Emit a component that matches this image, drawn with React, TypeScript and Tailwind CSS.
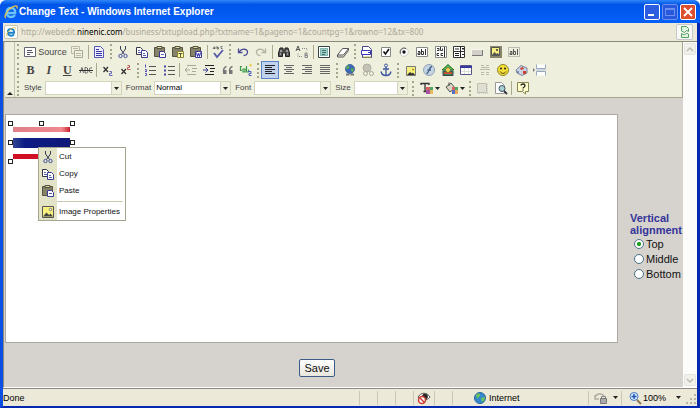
import React, { useState } from "react";

type IconProps = { children: React.ReactNode; small?: boolean };

const Icon = ({ children, small }: IconProps) => (
  <svg
    viewBox="0 0 16 16"
    className={`block shrink-0 ${small ? "size-3" : "size-4"}`}
    fill="none"
    stroke="#333"
    aria-hidden="true"
  >
    {children}
  </svg>
);

const Explorer = ({ small }: { small?: boolean }) => (
  <Icon small={small}>
    <path
      d="M4 9h8.200c.3-3-1.200-5-4-5S3.700 6 3.700 8.700 5.500 13 8.200 13c1.800 0 3-.7 3.700-2"
      stroke={small ? "#1c80c8" : "#6cc4f8"}
      strokeWidth="2.400"
    />
    <path d="M3 14C.5 13 3 7.500 8 4c4-3 7-3 6 .5" stroke="#e8c54a" strokeWidth="1.300" />
  </Icon>
);

const page = "M3.500 2.500h6l3 3v8h-9z";

const icons: Record<string, React.ReactNode> = {
  source: (
    <>
      <path d="M2.500 3.500h11v9h-11z" fill="#fff" stroke="#667" />
      <path d="M5 6.500h5M5 8.500h6M5 10.500h3" stroke="#556" />
    </>
  ),
  templates: (
    <>
      <path d="M2.500 2.500h8v7h-8z" stroke="#bbb8a8" />
      <path d="M5.500 6.500h8v7h-8z" fill="#efefde" stroke="#aaa89a" />
      <path d="M4 4.500h5M7 9.500h5M7 11.500h5" stroke="#bbb8a8" />
    </>
  ),
  doc: (
    <>
      <path d={page} fill="#eef" stroke="#5454b8" />
      <path d="M5 5.500h3M5 7.500h6M5 9.500h6M5 11.500h6" stroke="#3535a8" />
    </>
  ),
  cut: (
    <>
      <path d="M5.500 2v3l4 5.500M10.500 2v3l-4 5.500" stroke="#333a55" />
      <circle cx="5.500" cy="12" r="1.700" stroke="#4452a0" />
      <circle cx="10.500" cy="12" r="1.700" stroke="#4452a0" />
    </>
  ),
  copy: (
    <>
      <path d="M2.500 3.500h4l2 2v5h-6z" fill="#fff" stroke="#334" />
      <path d="M7.500 6.500h4l2 2v5h-6z" fill="#fff" stroke="#3c3c94" />
      <path d="M4 6.500h2M4 8.500h3M9 9.500h2M9 11.500h3" stroke="#5566a8" />
    </>
  ),
  paste: (
    <>
      <path d="M2.500 3.500h10v9h-10z" fill="#85826a" stroke="#55533f" />
      <path d="M5 2.500h5v2H5z" fill="#d8d5a8" stroke="#55533f" />
      <path d="M7.500 7.500h4l2 2v4h-6z" fill="#fff" stroke="#3c3c94" />
      <path d="M9 10.500h3" stroke="#5566a8" />
    </>
  ),
  pasteText: (
    <>
      <path d="M2.500 3.500h10v9h-10z" fill="#85826a" stroke="#55533f" />
      <path d="M5 2.500h5v2H5z" fill="#d8d5a8" stroke="#55533f" />
      <path d="M7.500 7.500h6v6h-6z" fill="#ffffa0" stroke="#8c863c" />
      <path d="M8.500 9.500h4M10.500 9v4" stroke="#554" />
    </>
  ),
  pasteWord: (
    <>
      <path d="M2.500 3.500h10v9h-10z" fill="#85826a" stroke="#55533f" />
      <path d="M5 2.500h5v2H5z" fill="#d8d5a8" stroke="#55533f" />
      <path d="M7.500 7.500h6v6h-6z" fill="#fff" stroke="#3c3c94" />
      <path d="M8.500 8.500l1 4 1-3 1 3 1-4" stroke="#2a2ab0" />
    </>
  ),
  spell: (
    <>
      <path d="M3 5l1-2h1v2M3.500 4.500H5M7 2v3h1.500V3.500H7M12.500 2.500H11v2h1.500" stroke="#555" strokeWidth=".8" />
      <path d="M4 9l3 4 6-7" stroke="#5858a8" strokeWidth="1.800" />
    </>
  ),
  undo: <path d="M3.500 4.500v4h4M4 8c3-4.500 9-3 8.500.5-.3 2-2 3-4 3" stroke="#4a4a94" strokeWidth="1.300" />,
  redo: <path d="M12.500 4.500v4h-4M12 8C9 3.500 3 5 3.500 8.500c.3 2 2 3 4 3" stroke="#b5b3a4" strokeWidth="1.300" />,
  find: (
    <>
      <path d="M4 4h3v2h2V4h3l1.500 5v3.500h-4V9h-3v3.500h-4V9z" fill="#555" stroke="#222" />
      <path d="M4 10h1M11 10h1M5 6v2M11 6v2" stroke="#ddd" />
    </>
  ),
  replace: (
    <>
      <path d="M2 7l2-5 2 5M2.800 5.500h2.400" stroke="#555" />
      <path d="M11 9v4.500h2.500v-2.200H11h2V9z" stroke="#888" />
      <path d="M8 4.500h5V7M8 12.500H4V9" stroke="#888" strokeDasharray="1 1" />
    </>
  ),
  selectAll: (
    <>
      <path d="M2.500 2.500h11v11h-11z" fill="#fff" stroke="#344" />
      <path d="M4.500 4.500h7v7h-7z" fill="#9fd0c8" stroke="#367e78" strokeDasharray="1 1" />
      <path d="M6 6.500h4M6 8.500h4M6 10.500h3" stroke="#3c706c" />
    </>
  ),
  eraser: (
    <>
      <path d="M2.500 11l5-6.500h6l-5 6.500z" fill="#fff" stroke="#555" />
      <path d="M2.500 11v2h6l5-6.500v-2" stroke="#555" />
    </>
  ),
  form: (
    <>
      <path d={page} fill="#fff" stroke="#44448c" />
      <path d="M2.500 6.500h9v4h-9z" fill="#fff" stroke="#3838b8" />
      <path d="M9 8.500h2" stroke="#3838b8" />
      <path d="M4 13h8" stroke="#c0b94a" />
    </>
  ),
  checkbox: (
    <>
      <path d="M3.500 3.500h9v9h-9z" fill="#fff" stroke="#888" />
      <path d="M5.500 7.500l2 2.500 3.500-5" stroke="#111" strokeWidth="1.600" />
    </>
  ),
  radio: (
    <>
      <circle cx="8" cy="8" r="4.300" fill="#fff" stroke="#ccc" />
      <path d="M4.500 9.500A4 4 0 0 1 10 4.500" stroke="#555" />
      <circle cx="8" cy="8" r="1.700" fill="#111" stroke="none" />
    </>
  ),
  textField: (
    <>
      <path d="M2.500 3.500h11v9h-11z" fill="#fff" stroke="#888" />
      <path d="M4 7.500h2v3H4V9h2M7.500 5v5.500h2v-3h-2M11.500 5v6" />
    </>
  ),
  textarea: (
    <>
      <path d="M2.500 2.500h11v11h-11z" fill="#fff" stroke="#888" />
      <path d="M4 4.500h2v2H4M7.500 3v3.500h2v-2M6 9.500H4v2h2M10 9.500H8v2h2M11.500 3v10" />
    </>
  ),
  select: (
    <>
      <path d="M2.500 2.500h11v5h-11zM2.500 7.500h11v6h-11z" fill="#fff" stroke="#333" />
      <path d="M9.500 2.500v11M4 5h4M4 9.500h4M4 11.500h4M11 4.500h2M12 5v1M11 10.500h2" stroke="#222" />
    </>
  ),
  button: (
    <>
      <path d="M3 6h10v5H3z" fill="#d2d0c8" stroke="none" />
      <path d="M2.500 11.500V5.500h11" stroke="#f8f8f0" />
      <path d="M3 11.500h10.500V6" stroke="#777" />
    </>
  ),
  imageButton: (
    <>
      <path d="M2 2h12v12H2z" fill="#88856a" stroke="none" />
      <path d="M3.500 3.500h8v8h-8z" fill="#f6ee80" stroke="#555" />
      <path d="M4 11l2.500-3 2 2 1-1 2 2z" fill="#555" stroke="none" />
      <circle cx="9" cy="6" r="1" fill="#333" stroke="none" />
    </>
  ),
  hidden: (
    <>
      <path d="M2.500 3.500h11v9h-11z" stroke="#888" strokeDasharray="1 1" />
      <path d="M4 7.500h2v3H4V9h2M7.500 5v5.500h2v-3h-2M11.500 5v6" stroke="#555" />
    </>
  ),
  strike: (
    <>
      <path d="M2 11l2-5.500L5.500 11M7 5.500V11h1.500c2 0 1.500-2.500 0-2.500 1.500 0 1.500-3 0-3zM14 6c-3.500-1.500-4 5.500 0 4.500" stroke="#666" />
      <path d="M1 8.500h14" />
    </>
  ),
  sub: (
    <>
      <path d="M3.500 5l4.500 5M8 5l-4.500 5" strokeWidth="1.300" />
      <path d="M9.500 9.500h2v2h-2v2h3" stroke="#6565b8" />
    </>
  ),
  sup: (
    <>
      <path d="M3.500 7l4.500 5M8 7l-4.500 5" strokeWidth="1.300" />
      <path d="M9.500 3.500h2v2h-2v2h3" stroke="#b85858" />
    </>
  ),
  ol: (
    <>
      <path d="M7 4.500h7M7 8.500h7M7 12.500h7" stroke="#555" />
      <path d="M3.500 2.500v3M3 7.500h1.500v1l-1.500 1h2M3 11.500h1.500v2H3" stroke="#5656b8" />
    </>
  ),
  ul: (
    <>
      <path d="M7 4.500h7M7 8.500h7M7 12.500h7" stroke="#555" />
      <path d="M3 4.500h2M3 8.500h2M3 12.500h2" stroke="#4646a8" strokeWidth="2" />
    </>
  ),
  outdent: (
    <>
      <path d="M4 3.500h9M9 6.500h5M9 9.500h4M4 12.500h9" stroke="#aaa89a" />
      <path d="M2 8h5M4.500 5.500L2 8l2.500 2.500" stroke="#aaa89a" />
    </>
  ),
  indent: (
    <>
      <path d="M4 3.500h9M9 6.500h5M9 9.500h4M4 12.500h9" stroke="#222" />
      <path d="M2 8h5M4.500 5.500L7 8l-2.500 2.500" stroke="#3c3c8c" />
    </>
  ),
  quote: (
    <>
      <path d="M6.500 4.500c-2 .5-3 2-3 5M12.500 4.500c-2 .5-3 2-3 5" stroke="#777" strokeWidth="1.500" />
      <path d="M3 8h3.500v4H3zM9 8h3.500v4H9z" fill="#777" stroke="none" />
    </>
  ),
  div: (
    <>
      <path d="M4 4.500H2.500v4H4M5 7h2v3H5zM8.500 4v6h2V7.500" stroke="#3c9c4c" strokeWidth="1.200" />
      <path d="M10 9.500h3v2h-2v2h2.500" stroke="#4c58b8" />
      <path d="M11 3h3M12.500 1.500v3" stroke="#eec84c" />
    </>
  ),
  left: <path d="M3 3.500h10M3 5.500h7M3 7.500h10M3 9.500h7M3 11.500h10" stroke="#222" />,
  center: <path d="M3 3.500h10M5 5.500h6M3 7.500h10M5 9.500h6M3 11.500h10" stroke="#666" />,
  right: <path d="M3 3.500h10M6 5.500h7M3 7.500h10M6 9.500h7M3 11.500h10" stroke="#666" />,
  justify: <path d="M3 3.500h10M3 5.500h10M3 7.500h10M3 9.500h10M3 11.500h10" stroke="#666" />,
  link: (
    <>
      <circle cx="9" cy="7" r="4.500" fill="#3a68b8" stroke="#4a6a9c" />
      <path d="M6 4c2-1 3 0 2 2s-3 1-3 0zM10 6l3 1-1 3-2-1z" fill="#5aac54" stroke="none" />
      <path d="M5 12.500h3.500M9.500 12.500H13" stroke="#777" strokeWidth="2" />
    </>
  ),
  unlink: (
    <>
      <circle cx="7" cy="6" r="4" fill="#c4c2b4" stroke="#b0ae9e" />
      <circle cx="5.500" cy="11.500" r="2" stroke="#aaa89a" />
      <circle cx="11.500" cy="11.500" r="2" stroke="#aaa89a" />
    </>
  ),
  anchor: (
    <>
      <circle cx="8" cy="3.500" r="1.500" stroke="#3c58a0" />
      <path d="M8 5v8.500M5 7h6M3 9.500c.5 2.500 2 4 5 4s4.500-1.500 5-4" stroke="#3c58a0" strokeWidth="1.300" />
    </>
  ),
  image: (
    <>
      <path d="M3.500 4.500h9v9h-9z" fill="#f8f07c" stroke="#777" />
      <path d="M4 13l3-3 2 1.500 1-1L12 13z" fill="#333" stroke="none" />
      <circle cx="10" cy="7.500" r="1" fill="#b08818" stroke="none" />
    </>
  ),
  picture: (
    <>
      <path d="M2.500 2.500h11v11h-11z" fill="#f8f07c" stroke="#555" />
      <path d="M3 12.500l3.500-4 2.500 2.500 1.500-1.500 2.500 3z" fill="#444" stroke="none" />
      <circle cx="10.500" cy="5.500" r="1.200" fill="#fff" stroke="#776" />
    </>
  ),
  flash: (
    <>
      <circle cx="8" cy="8" r="5.500" fill="#c4d4e4" stroke="#90a4b4" />
      <path d="M11 4.500c-3 0-3 7-5.500 7M6.500 8h3.500" stroke="#446288" strokeWidth="1.300" />
    </>
  ),
  gallery: (
    <>
      <path d="M8 2.500l6 5.500H2z" fill="#55b854" stroke="#2c762c" />
      <path d="M3 9h10v4.500H3z" fill="#3c8c4c" stroke="#345" />
      <path d="M4 11h8" stroke="#cc4c34" strokeWidth="2" />
      <path d="M5 8l3-3 3 3-3 3z" fill="#f0cf42" stroke="#775" />
    </>
  ),
  table: (
    <>
      <path d="M2.500 3.500h11v9h-11z" fill="#fff" stroke="#555588" />
      <path d="M2 4h12v2H2z" fill="#3838a0" stroke="none" />
      <path d="M3 9.500h10M6.500 6v6M10.500 6v6" stroke="#ddd" />
    </>
  ),
  rule: <path d="M4 3.500h3M9 3.500h3M3 7.500h10M4 10.500h3M9 10.500h3M4 12.500h3M9 12.500h3M4 5.500h8" stroke="#bbb9aa" />,
  smiley: (
    <>
      <circle cx="8" cy="8" r="5.500" fill="#f4df36" stroke="#8f862c" />
      <circle cx="6" cy="6.500" r="1" fill="#222" stroke="none" />
      <circle cx="10" cy="6.500" r="1" fill="#222" stroke="none" />
      <path d="M5 9.500c1.500 2.500 4.500 2.500 6 0" stroke="#443f12" />
    </>
  ),
  special: (
    <>
      <path d="M2 8l5-4.500 6 2.500v5l-5 2.500-5-2.500z" fill="#cad4e4" stroke="#78849c" />
      <path d="M6 6l3-1 1 2-3 1zM9 9h3v3H9z" fill="#cc4034" stroke="none" />
      <path d="M4 9v2" stroke="#3c4ca0" />
    </>
  ),
  pageBreak: (
    <>
      <path d="M4.500 2.500v4h9v-4M4.500 13.500v-4h9v4" fill="#fff" stroke="#98a8bc" />
      <path d="M1 6l2 2-2 2z" fill="#778" stroke="none" />
      <path d="M4 8h10" stroke="#b8c4d4" />
    </>
  ),
  blocks: (
    <>
      <path d="M3.500 3.500h9v9h-9z" fill="#e0dfd2" stroke="#c0bfb2" />
      <path d="M3 13.500h11M13.500 4v9" stroke="#ccc" strokeDasharray="1 1" />
    </>
  ),
  preview: (
    <>
      <path d="M2.500 2.500h6l3 3v8h-9z" fill="#fff" stroke="#999" />
      <circle cx="9" cy="8.500" r="3" fill="#a9d0d0" stroke="#456" />
      <path d="M11 11l3 3" stroke="#334" strokeWidth="1.800" />
    </>
  ),
  about: (
    <>
      <path d="M2.500 2.500h11v9h-3v2.500l-3-2.500h-5z" fill="#ffffd0" stroke="#88864c" />
      <path d="M6 5.500c0-2 4-2 4 0S8 7 8 8.500M8 9.500v1" stroke="#222" strokeWidth="1.300" />
    </>
  ),
  textColor: (
    <>
      <path d="M2 5V3.500h8V5M6 3.500v8M4.500 11.500h3" stroke="#333" strokeWidth="1.300" />
      <path d="M7 7h4v3H7z" fill="#d86060" stroke="none" />
      <path d="M11 7h3v3h-3z" fill="#4caa66" stroke="none" />
      <path d="M7 10h4v4H7z" fill="#a954a0" stroke="none" />
      <path d="M11 10h3v4h-3z" fill="#e8b85c" stroke="none" />
    </>
  ),
  bgColor: (
    <>
      <path d="M2 7l5-4 4 5-5 4z" fill="#d8d6c4" stroke="#555" />
      <path d="M5 6V2.500" stroke="#444" />
      <path d="M8 7h3v3H8z" fill="#d86060" stroke="none" />
      <path d="M11 7h3v3h-3z" fill="#4caa66" stroke="none" />
      <path d="M8 10h3v4H8z" fill="#5470c0" stroke="none" />
      <path d="M11 10h3v4h-3z" fill="#e8a85c" stroke="none" />
    </>
  ),
};

const letters: Record<string, React.ReactNode> = {
  bold: <b>B</b>,
  italic: <b className="italic">I</b>,
  underline: <b className="underline">U</b>,
};

const Grip = () => (
  <div className="h-[15px] w-[3px] border-l-2 border-dotted border-[#a5a58a]" />
);

const Separator = () => <div className="h-3.5 w-px bg-[#a9a98c]" />;

const ToolButton = ({ name }: { name: string }) => {
  const active = name === "left";
  return (
    <button
      type="button"
      aria-label={name}
      aria-pressed={active}
      className={`w-4 ${
        active ? "bg-[#c1d2ee] ring-1 ring-[#5b83c8]" : "hover:bg-[#dff1ff]"
      }`}
    >
      {letters[name] ? (
        <span className="block text-center font-['Liberation_Serif',serif] text-[12px] leading-4 text-[#444]">
          {letters[name]}
        </span>
      ) : (
        <Icon>{icons[name]}</Icon>
      )}
    </button>
  );
};

// "|" stands for a separator line
const ToolGroup = ({ items, width }: { items: string[]; width: string }) => (
  <div className={`flex items-center justify-between ${width}`}>
    <Grip />
    {items.map((name, index) => {
      if (name === "|") return <Separator key={index} />;
      if (name === "source")
        return (
          <button
            key={index}
            type="button"
            className="flex items-center text-[9px] text-[#444]"
          >
            <Icon>{icons.source}</Icon>
            <span>Source</span>
          </button>
        );
      return <ToolButton key={index} name={name} />;
    })}
  </div>
);

const Arrow = () => (
  <svg viewBox="0 0 5 3" className="block h-[3px] w-[5px] shrink-0" aria-hidden="true">
    <path d="M0 0h5L2.500 3z" fill="#222" />
  </svg>
);

const Combo = ({
  label,
  options,
  width,
}: {
  label: string;
  options: string[];
  width: string;
}) => (
  <label className="flex items-center gap-[3px] text-[#444]">
    {label}
    <span className={`relative block ${width}`}>
      <select className="block h-3.5 w-full appearance-none border border-[#d4d4bc] bg-white pl-px text-[8px] leading-3 text-black">
        {options.map((option) => (
          <option key={option}>{option}</option>
        ))}
      </select>
      <span className="pointer-events-none absolute inset-y-px right-px flex w-2.5 items-center justify-center border-l border-[#d4d4bc] bg-[#efefde]">
        <Arrow />
      </span>
    </span>
  </label>
);

const Toolbar = () => (
  <div className="flex border-r border-b border-[#a5a58f] bg-[#efefde] font-['Liberation_Sans',sans-serif] text-[8px] leading-3">
    <button
      type="button"
      aria-label="Collapse toolbar"
      className="flex w-2.5 items-end justify-center border-r border-[#c4c4ae] pb-0.5"
    >
      <svg viewBox="0 0 6 3" className="block h-[3px] w-1.5" aria-hidden="true">
        <path d="M0 3h6L3 0z" fill="#222" />
      </svg>
    </button>
    <div className="flex flex-col gap-px py-px pl-0.5">
      <div className="flex h-[17px] gap-[3px]">
        <ToolGroup width="w-[90px]" items={["source", "templates", "|", "doc"]} />
        <ToolGroup
          width="w-[116px]"
          items={["cut", "copy", "paste", "pasteText", "pasteWord", "|", "spell"]}
        />
        <ToolGroup
          width="w-[122px]"
          items={["undo", "redo", "|", "find", "replace", "|", "selectAll", "eraser"]}
        />
        <ToolGroup
          width="w-[168px]"
          items={[
            "form", "checkbox", "radio", "textField", "textarea",
            "select", "button", "imageButton", "hidden",
          ]}
        />
      </div>
      <div className="flex h-[18px] gap-[3px]">
        <ToolGroup
          width="w-[117px]"
          items={["bold", "italic", "underline", "strike", "|", "sub", "sup"]}
        />
        <ToolGroup
          width="w-[117px]"
          items={["ol", "ul", "|", "outdent", "indent", "quote", "div"]}
        />
        <ToolGroup width="w-[76px]" items={["left", "center", "right", "justify"]} />
        <ToolGroup width="w-[58px]" items={["link", "unlink", "anchor"]} />
        <ToolGroup
          width="w-[151px]"
          items={["image", "flash", "gallery", "table", "rule", "smiley", "special", "pageBreak"]}
        />
      </div>
      <div className="flex h-4 items-center gap-1">
        <Grip />
        <Combo label="Style" options={[""]} width="w-[77px]" />
        <Combo label="Format" options={["Normal"]} width="w-[77px]" />
        <Combo label="Font" options={[""]} width="w-[77px]" />
        <Combo label="Size" options={[""]} width="w-[54px]" />
        <div className="flex items-center gap-1">
          <Grip />
          {["textColor", "bgColor"].map((name) => (
            <button key={name} type="button" aria-label={name} className="flex items-center">
              <Icon>{icons[name]}</Icon>
              <Arrow />
            </button>
          ))}
        </div>
        <ToolGroup width="w-[62px]" items={["blocks", "preview", "|", "about"]} />
      </div>
    </div>
  </div>
);

const menuItems = [
  { label: "Cut", icon: "cut" },
  { label: "Copy", icon: "copy" },
  { label: "Paste", icon: "paste" },
];

const MenuItem = ({ label, icon }: { label: string; icon: string }) => (
  <button type="button" role="menuitem" className="flex w-full items-center text-left hover:bg-[#e3e3c7]">
    <span className="flex h-[17px] w-[18px] shrink-0 items-center justify-center bg-[#e3e3c7]">
      <Icon>{icons[icon]}</Icon>
    </span>
    <span className="pl-0.5 whitespace-nowrap">{label}</span>
  </button>
);

const ContextMenu = () => (
  <div
    role="menu"
    className="absolute top-8 left-8 w-[88px] border border-[#a5a58f] bg-white font-['Liberation_Sans',sans-serif] text-[8px] leading-3 text-[#111]"
  >
    {menuItems.map((item) => (
      <MenuItem key={item.label} {...item} />
    ))}
    <div className="flex h-1 bg-[#e3e3c7] pl-[18px]">
      <div className="flex flex-1 items-center bg-white pr-0.5">
        <div className="h-px flex-1 bg-[#c8c8b0]" />
      </div>
    </div>
    <MenuItem label="Image Properties" icon="picture" />
  </div>
);

// Selected flag picture with its resize handles
const SelectedImage = () => (
  <div className="relative mt-3 ml-[7px] h-[33px] w-[57px]">
    <div className="h-[5px] bg-linear-to-r from-[#e08088] via-[#f08890] via-85% to-[#c8102c]" />
    <div className="mt-1.5 h-2.5 bg-linear-to-r from-[#344494] via-[#0c1c84] via-20% to-[#101878]" />
    <div className="mt-1.5 h-[5px] bg-[#d01024]" />
    {[
      "-top-1.5 -left-[5px]",
      "-top-1.5 left-[26px]",
      "-top-1.5 -right-[5px]",
      "top-[13px] -left-[5px]",
      "top-[13px] -right-[5px]",
      "-bottom-1 -left-[5px]",
    ].map((place) => (
      <span key={place} className={`absolute size-[5px] border border-[#222] bg-white ${place}`} />
    ))}
  </div>
);

const AlignmentOptions = () => {
  const [alignment, setAlignment] = useState("Top");
  return (
    <div
      role="radiogroup"
      aria-labelledby="alignment-title"
      className="w-[65px] pt-9 pl-3 text-[11px] leading-3 text-[#111]"
    >
      <div id="alignment-title" className="font-bold text-[#35349a]">
        Vertical alignment
      </div>
      <div className="pl-1">
        {["Top", "Middle", "Bottom"].map((option) => (
          <label key={option} className="flex h-[15px] items-center gap-0.5">
            <input
              type="radio"
              name="alignment"
              checked={alignment === option}
              onChange={() => setAlignment(option)}
              className="size-2.5 shrink-0 appearance-none rounded-full border border-[#4a7088] bg-white checked:bg-[radial-gradient(circle,#21a121_0_30%,#fff_45%)]"
            />
            {option}
          </label>
        ))}
      </div>
    </div>
  );
};

const ScrollButton = ({ down }: { down?: boolean }) => (
  <button
    type="button"
    aria-label={down ? "Scroll down" : "Scroll up"}
    className="m-px flex h-3 items-center justify-center rounded-xs border border-[#e5e4dc] bg-[#f1f0ea]"
  >
    <svg viewBox="0 0 8 5" className="block h-[5px] w-2" fill="none" stroke="#bdbcb2" strokeWidth="1.500">
      <path d={down ? "M1 1l3 3 3-3" : "M1 4l3-3 3 3"} />
    </svg>
  </button>
);

const StatusLine = () => <div className="h-3.5 w-px bg-[#cbc7b4]" />;

const StatusBar = () => (
  <footer className="flex h-[18px] items-center border-t border-[#8c8a7c] bg-[#ece9d8] font-['Liberation_Sans',sans-serif] text-[9px] leading-3 text-black">
    <span className="flex-1">Done</span>
    <div className="flex items-center gap-[17px]">
      <StatusLine />
      <StatusLine />
      <StatusLine />
      <StatusLine />
    </div>
    <div className="flex w-5 justify-center">
      <Icon>
        <path d="M2 7c3-5 9-5 12 0-3 4-9 4-12 0z" fill="#fff" stroke="#555" />
        <circle cx="9" cy="6.500" r="2.500" fill="#222" />
        <circle cx="6" cy="10" r="3.500" fill="#fff" stroke="#d03c34" strokeWidth="1.500" />
        <path d="M3.500 7.500l5 5" stroke="#d03c34" strokeWidth="1.500" />
      </Icon>
    </div>
    <div className="flex items-center gap-[17px]">
      <StatusLine />
      <StatusLine />
    </div>
    <div className="flex w-[135px] items-center gap-px pl-[19px]">
      <Icon>
        <circle cx="8" cy="8" r="5.500" fill="#3488cc" stroke="#2c649c" />
        <path d="M4 5c2-2 4-2 4 0s-2 2-3 4zM9 8l4-1c0 3-1 4-3 5z" fill="#6cc45c" stroke="none" />
      </Icon>
      Internet
    </div>
    <StatusLine />
    <button type="button" aria-label="Security report" className="flex w-8 items-center gap-1 pl-1">
      <Icon>
        <path d="M2 8c0-4 6-6 9-2M2 5v4h4" stroke="#b0aea4" strokeWidth="1.500" />
        <path d="M7.500 8.500h6v5h-6z" fill="#aaa" stroke="#777" />
        <path d="M8.500 8V6.500h4V8" stroke="#888" />
      </Icon>
      <Arrow />
    </button>
    <StatusLine />
    <button type="button" className="flex w-[59px] items-center pl-[5px]">
      <Icon>
        <circle cx="7" cy="6.500" r="4" fill="#d8ecff" stroke="#4478c4" />
        <path d="M7 4v5M4.500 6.500h5" stroke="#2454a8" strokeWidth="1.500" />
        <path d="M10 10l4 4" stroke="#8c7450" strokeWidth="2" />
      </Icon>
      <span className="flex-1 text-left">100%</span>
      <Arrow />
    </button>
    <svg viewBox="0 0 12 12" className="ml-1 block h-3 w-3" aria-hidden="true">
      <path d="M9 2h2v2H9zM9 6h2v2H9zM5 6h2v2H5zM9 10h2v2H9zM5 10h2v2H5zM1 10h2v2H1z" fill="#b8b4a0" />
    </svg>
  </footer>
);

const TitleBar = () => (
  <header className="flex h-[23px] items-center rounded-t-md bg-linear-to-b from-[#2f86f8] via-[#0054e8] via-20% to-[#0560fa] pr-1 pl-[3px]">
    <Explorer />
    <h1 className="flex-1 font-['Liberation_Sans',sans-serif] text-[10px] leading-4 font-bold text-white">
      Change Text - Windows Internet Explorer
    </h1>
    <button type="button" aria-label="Minimize" className="flex size-4 items-end rounded-xs border border-white bg-[#2c5ce0] p-[3px]">
      <span className="h-0.5 w-1.5 bg-white" />
    </button>
    <button type="button" aria-label="Maximize" disabled className="ml-0.5 flex size-4 items-center justify-center rounded-xs border border-[#6c90f0] bg-[#2858dc]">
      <span className="h-2 w-2.5 border border-t-2 border-[#6c90f0]" />
    </button>
    <button type="button" aria-label="Close" className="ml-0.5 flex size-4 items-center justify-center rounded-xs border border-white bg-[#dc5030]">
      <svg viewBox="0 0 10 10" className="block size-2.5" stroke="#fff" strokeWidth="1.800">
        <path d="M1 1l8 8M9 1l-8 8" />
      </svg>
    </button>
  </header>
);

const AddressBar = () => (
  <div className="flex h-[18px] items-center bg-[#ece9d8] font-['Noto_Sans',sans-serif] text-[8px] leading-3 text-[#aca899]">
    <span className="mx-px flex size-3.5 items-center justify-center rounded-xs border border-[#c8c4b4] bg-white">
      <Explorer small />
    </span>
    <span className="flex-1 pl-0.5 whitespace-nowrap">
      http://webedit.<span className="text-black">ninenic.com</span>
      /business/txtupload.php?txtname=1&amp;pageno=1&amp;countpg=1&amp;rowno=12&amp;tx=800
    </span>
    <button type="button" aria-label="Compatibility view" className="mr-1 flex h-4 w-[17px] items-center justify-center rounded-xs border border-[#c4c8cc] bg-[#f8f8f4]">
      <Icon>
        <path d="M4.500 2.500h5l2 2v3l-2-1-2 2-3-1.500zM4.500 13.500v-4l3 1.500 2-2 2 1v3.500z" fill="#e0f4e0" stroke="#54a060" />
      </Icon>
    </button>
  </div>
);

export default function App() {
  return (
    <div className="flex min-h-screen flex-col rounded-t-lg border-x-[3px] border-b-2 border-l-[#0b50e4] border-r-[#0428b0] border-b-[#0428b0] bg-[#ece9d8]">
      <div className="-mx-[3px] rounded-t-lg">
        <TitleBar />
      </div>
      <AddressBar />
      <main className="flex flex-1 border-t border-b border-l border-t-[#8c8a7c] border-b-white border-l-[#8c8a7c] bg-[#d6d3ce] font-['Liberation_Sans',sans-serif]">
        <div className="flex flex-1 flex-col pl-px">
          <Toolbar />
          <div className="mt-4 flex flex-1">
            <div
              role="textbox"
              aria-label="Page text"
              className="relative min-h-[229px] flex-1 border border-[#aaa8a4] bg-white"
            >
              <SelectedImage />
              <ContextMenu />
            </div>
            <div className="flex items-center">
              <AlignmentOptions />
            </div>
          </div>
          <div className="flex justify-center pt-4 pr-[54px] pb-2.5">
            <button
              type="button"
              className="h-[18px] rounded-xs border border-[#3c5c88] bg-linear-to-b from-white to-[#e8e6dc] px-1 text-[11px] leading-4 text-[#111]"
            >
              Save
            </button>
          </div>
        </div>
        <div className="flex w-3.5 flex-col justify-between bg-[#fcfcfa]">
          <ScrollButton />
          <ScrollButton down />
        </div>
      </main>
      <StatusBar />
    </div>
  );
}
